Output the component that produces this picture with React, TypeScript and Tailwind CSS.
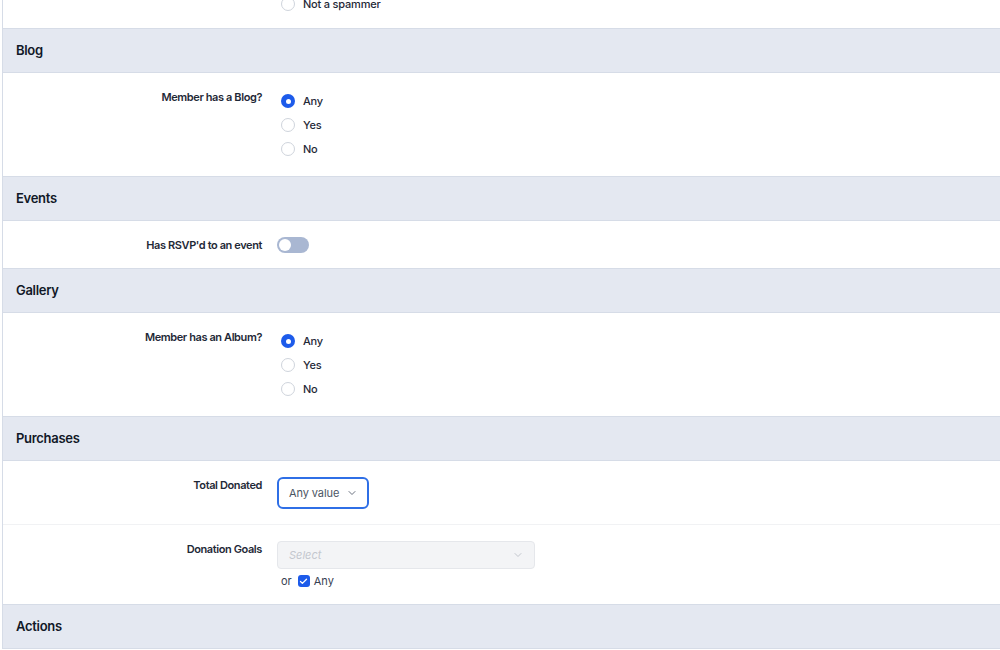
import { ChevronDown, Check } from "lucide-react";
import type { ReactNode } from "react";

const Radio = ({ label, checked = false }: { label: string; checked?: boolean }) => (
  <div className="flex h-6 items-center gap-2 pl-1">
    {checked ? (
      <span className="flex h-[14px] w-[14px] items-center justify-center rounded-full bg-[#1d5bea]">
        <span className="h-[5px] w-[5px] rounded-full bg-white" />
      </span>
    ) : (
      <span className="h-[14px] w-[14px] rounded-full border border-[#cfd4dc] bg-white" />
    )}
    <span className="text-[11px] font-medium tracking-[-0.2px] text-[#1f2937]">{label}</span>
  </div>
);

const SectionHeader = ({ title }: { title: string }) => (
  <div className="flex h-[44px] items-center border-b border-[#d6dce7] bg-[#e4e8f1] px-[13px]">
    <h2 className="text-[13px] font-semibold tracking-[-0.3px] text-[#111827]">{title}</h2>
  </div>
);

const Row = ({ label, children, divider = false }: { label: string; children: ReactNode; divider?: boolean }) => (
  <div className={`flex gap-[15px] pb-[15px] pt-4 ${divider ? "border-b border-[#f1f2f4]" : ""}`}>
    <div className="w-[259px] shrink-0 text-right text-[11px] font-semibold leading-4 tracking-[-0.4px] text-[#1f2937]">
      {label}
    </div>
    <div className="flex flex-col">{children}</div>
  </div>
);

export default function App() {
  return (
    <div className="min-h-screen bg-white pl-[2px] font-['Inter',sans-serif]">
      <div className="border-l border-[#d6dce7]">
        {/* spam row, scrolled off */}
        <div className="flex h-[29px] flex-col justify-end overflow-hidden border-b border-[#d6dce7] pb-4 pl-[274px]">
          <Radio label="Spammer" />
          <Radio label="Not a spammer" />
        </div>

        <SectionHeader title="Blog" />
        <div className="border-b border-[#d6dce7]">
          <Row label="Member has a Blog?">
            <Radio label="Any" checked />
            <Radio label="Yes" />
            <Radio label="No" />
          </Row>
        </div>

        <SectionHeader title="Events" />
        <div className="border-b border-[#d6dce7]">
          <Row label="Has RSVP'd to an event">
            <div className="flex h-4 w-8 items-center rounded-full bg-[#a9b7d2] px-[2px]">
              <span className="h-3 w-3 rounded-full bg-white" />
            </div>
          </Row>
        </div>

        <SectionHeader title="Gallery" />
        <div className="border-b border-[#d6dce7]">
          <Row label="Member has an Album?">
            <Radio label="Any" checked />
            <Radio label="Yes" />
            <Radio label="No" />
          </Row>
        </div>

        <SectionHeader title="Purchases" />
        <div className="border-b border-[#d6dce7]">
          <Row label="Total Donated" divider>
            <div className="flex h-8 w-[92px] items-center justify-between rounded-md border-2 border-[#2f6fe6] bg-white pl-[10px] pr-[9px]">
              <span className="text-[11px] tracking-[-0.1px] text-[#4b5563]">Any value</span>
              <ChevronDown className="h-3 w-3 text-[#6b7280]" strokeWidth={2} />
            </div>
          </Row>
          <Row label="Donation Goals">
            <div className="flex h-7 w-[258px] items-center justify-between rounded border border-[#e5e7eb] bg-[#f3f4f6] pl-[11px] pr-[10px]">
              <span className="text-[11px] italic text-[#c3c7ce]">Select</span>
              <ChevronDown className="h-3 w-3 text-[#c3c7ce]" strokeWidth={2} />
            </div>
            <div className="mt-1 flex h-4 items-center pl-1 text-[11px] text-[#374151]">
              <span>or</span>
              <span className="ml-[6px] flex h-3 w-3 items-center justify-center rounded-[3px] bg-[#1d5bea]">
                <Check className="h-[9px] w-[9px] text-white" strokeWidth={3.5} />
              </span>
              <span className="ml-1">Any</span>
            </div>
          </Row>
        </div>

        <SectionHeader title="Actions" />
      </div>
    </div>
  );
}
